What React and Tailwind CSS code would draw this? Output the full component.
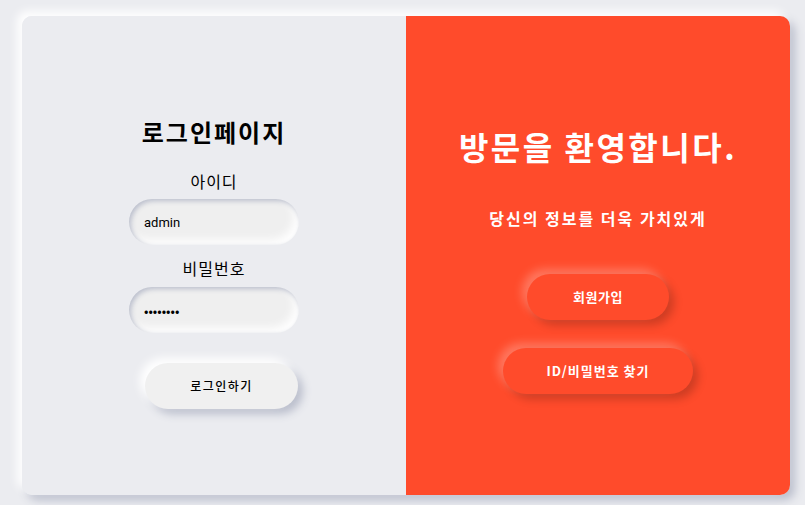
export default function App() {
  return (
    <div className="w-[805px] h-[505px] bg-[#ebecf0] pt-4 pl-[22px] font-['Noto_Sans_CJK_KR',sans-serif]">
      <div className="w-[768px] h-[479px] flex rounded-[10px] overflow-hidden shadow-[-5px_-5px_10px_#ffffff,5px_5px_10px_#babecc]">
        {/* left: login form */}
        <div className="w-[384px] h-full bg-[#ebecf0] flex flex-col items-center pt-[100px]">
          <h1 className="h-8 leading-8 text-2xl font-bold tracking-[2px] text-black">로그인페이지</h1>
          <label className="mt-[21px] h-6 leading-6 text-base tracking-[1px] text-black">아이디</label>
          <input
            defaultValue="admin"
            className="mt-[6px] w-[170px] h-[46px] rounded-full bg-[#efefef] px-[15px] text-[13px] text-black font-['Roboto',sans-serif] outline-none shadow-[inset_2px_2px_5px_#babecc,inset_-5px_-5px_10px_#ffffff]"
          />
          <label className="mt-[11px] h-6 leading-6 text-base tracking-[1px] text-black">비밀번호</label>
          <input
            type="password"
            defaultValue="12345678"
            className="mt-[7px] w-[170px] h-[46px] rounded-full bg-[#efefef] px-[15px] text-[13px] text-black outline-none shadow-[inset_2px_2px_5px_#babecc,inset_-5px_-5px_10px_#ffffff]"
          />
          <button className="mt-[30px] ml-[15px] w-[153px] h-[46px] rounded-full bg-[#f0f0f0] text-[12px] font-medium tracking-[1.5px] text-black shadow-[-5px_-5px_10px_#ffffff,5px_5px_8px_#babecc]">
            로그인하기
          </button>
        </div>
        {/* right: welcome */}
        <div className="w-[384px] h-full bg-[#ff4b2b] flex flex-col items-center pt-[110px] text-white">
          <h2 className="h-10 leading-10 text-[32px] font-bold tracking-[2.5px]">방문을 환영합니다.</h2>
          <p className="mt-10 h-6 leading-6 text-base font-bold tracking-[2px]">당신의 정보를 더욱 가치있게</p>
          <button className="mt-[44px] w-[142px] h-[46px] rounded-full bg-[#ff4b2b] text-[13px] font-bold tracking-[0.5px] text-white shadow-[-5px_-5px_10px_rgba(255,255,255,0.25),5px_5px_10px_rgba(0,0,0,0.2)]">
            회원가입
          </button>
          <button className="mt-[28px] w-[190px] h-[46px] rounded-full bg-[#ff4b2b] text-[13px] font-bold tracking-[1px] text-white shadow-[-5px_-5px_10px_rgba(255,255,255,0.25),5px_5px_10px_rgba(0,0,0,0.2)]">
            ID/비밀번호 찾기
          </button>
        </div>
      </div>
    </div>
  );
}
